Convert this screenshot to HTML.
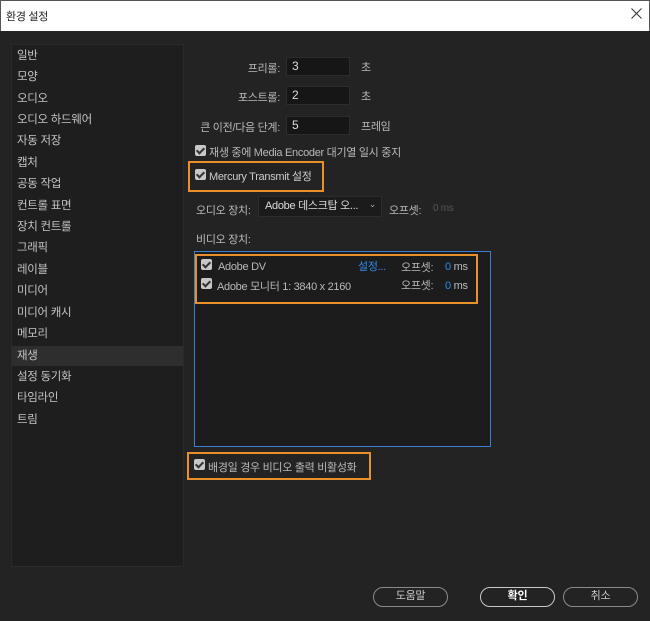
<!DOCTYPE html>
<html><head><meta charset="utf-8"><style>
*{margin:0;padding:0;box-sizing:border-box}
body{width:650px;height:621px;background:#232323;font-family:"Liberation Sans","Noto Sans CJK KR",sans-serif;font-size:11px;letter-spacing:-0.3px;color:#b9b9b9;position:relative;overflow:hidden}
.a{position:absolute;white-space:nowrap}
.r{position:absolute;white-space:nowrap;text-align:right;width:120px}
.title{left:0;top:0;width:650px;height:31px;background:#fff;border:1px solid #555;border-bottom:none}
.panel{left:11px;top:44px;width:173px;height:523px;background:#1e1e1e;border:1px solid #2a2a2a}
.item{left:17px;height:20px;line-height:20px;color:#c4c4c4;font-size:11.5px}
.sel{left:12px;top:346px;width:171px;height:20px;background:#2e2e2e}
.inp{background:#161616;border:1px solid #2c2c2c;height:19px;width:64px;color:#ddd;padding-left:5px;line-height:17px;font-size:12px}
.cb{width:11px;height:11px;background:#c8c8c8;border-radius:2px}
.cb:after{content:"";position:absolute;left:3px;top:1px;width:3px;height:6px;border:solid #333;border-width:0 2px 2px 0;transform:rotate(45deg)}
.or{border:2px solid #e8902a}
.btn{height:20px;border:1.5px solid #8a8a8a;border-radius:10px;text-align:center;line-height:17px;color:#c8c8c8}
</style></head><body>
<div class="a title"></div>
<div class="a" style="left:6px;top:8px;color:#222;font-size:11px">환경 설정</div>
<svg class="a" style="left:631px;top:8px" width="11" height="11"><path d="M0.5 0.5L10.5 10.5M10.5 0.5L0.5 10.5" stroke="#333" stroke-width="1"/></svg>
<div class="a panel"></div>
<div class="a sel"></div>
<div class="a item" style="top:46px">일반</div>
<div class="a item" style="top:67px">모양</div>
<div class="a item" style="top:89px">오디오</div>
<div class="a item" style="top:110px">오디오 하드웨어</div>
<div class="a item" style="top:131px">자동 저장</div>
<div class="a item" style="top:153px">캡처</div>
<div class="a item" style="top:174px">공동 작업</div>
<div class="a item" style="top:196px">컨트롤 표면</div>
<div class="a item" style="top:217px">장치 컨트롤</div>
<div class="a item" style="top:238px">그래픽</div>
<div class="a item" style="top:260px">레이블</div>
<div class="a item" style="top:281px">미디어</div>
<div class="a item" style="top:303px">미디어 캐시</div>
<div class="a item" style="top:324px">메모리</div>
<div class="a item" style="top:346px">재생</div>
<div class="a item" style="top:367px">설정 동기화</div>
<div class="a item" style="top:388px">타임라인</div>
<div class="a item" style="top:410px">트림</div>

<div class="r" style="left:160px;top:60px">프리롤:</div>
<div class="a inp" style="left:286px;top:57px">3</div>
<div class="a" style="left:361px;top:59px">초</div>
<div class="r" style="left:160px;top:89px">포스트롤:</div>
<div class="a inp" style="left:286px;top:86px">2</div>
<div class="a" style="left:361px;top:88px">초</div>
<div class="r" style="left:160px;top:119px">큰 이전/다음 단계:</div>
<div class="a inp" style="left:286px;top:116px">5</div>
<div class="a" style="left:361px;top:118px">프레임</div>

<div class="a cb" style="left:195px;top:145px"></div>
<div class="a" style="left:209px;top:144px">재생 중에 Media Encoder 대기열 일시 중지</div>
<div class="a or" style="left:188px;top:161px;width:136px;height:31px"></div>
<div class="a cb" style="left:195px;top:169px"></div>
<div class="a" style="left:209px;top:168px;color:#ccc">Mercury Transmit 설정</div>

<div class="a" style="left:196px;top:202px">오디오 장치:</div>
<div class="a" style="left:258px;top:196px;width:124px;height:21px;background:#1b1b1b;border:1px solid #2c2c2c;color:#ddd;padding-left:6px;line-height:19px">Adobe 데스크탑 오... <span style="position:absolute;right:5px;top:-2px;font-size:9px;color:#aaa">⌄</span></div>
<div class="a" style="left:389px;top:202px">오프셋:</div>
<div class="a" style="left:433px;top:203px;color:#555;font-size:10px">0 ms</div>
<div class="a" style="left:196px;top:231px">비디오 장치:</div>

<div class="a" style="left:194px;top:251px;width:297px;height:196px;background:#1c1c1c;border:1px solid #3c7fd0"></div>
<div class="a or" style="left:195px;top:254px;width:283px;height:50px"></div>
<div class="a cb" style="left:201px;top:259px"></div>
<div class="a" style="left:218px;top:261px">Adobe DV</div>
<div class="a" style="left:358px;top:258px;color:#2d8ceb">설정...</div>
<div class="a" style="left:401px;top:259px">오프셋:</div>
<div class="a" style="left:445px;top:261px"><span style="color:#2d8ceb">0</span> ms</div>
<div class="a cb" style="left:201px;top:278px"></div>
<div class="a" style="left:217px;top:278px">Adobe 모니터 1: 3840 x 2160</div>
<div class="a" style="left:401px;top:277px">오프셋:</div>
<div class="a" style="left:445px;top:280px"><span style="color:#2d8ceb">0</span> ms</div>

<div class="a or" style="left:187px;top:452px;width:184px;height:28px"></div>
<div class="a cb" style="left:194px;top:459px"></div>
<div class="a" style="left:208px;top:459px">배경일 경우 비디오 출력 비활성화</div>

<div class="a btn" style="left:373px;top:587px;width:75px">도움말</div>
<div class="a btn" style="left:480px;top:587px;width:75px;border-color:#c8c8c8;color:#fff;font-weight:bold">확인</div>
<div class="a btn" style="left:563px;top:587px;width:75px">취소</div>
</body></html>
